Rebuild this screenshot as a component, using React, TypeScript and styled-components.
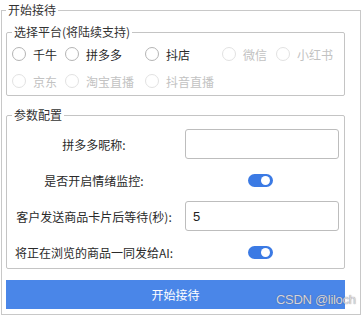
import React from 'react'
import styled, { createGlobalStyle } from 'styled-components'

const GlobalStyle = createGlobalStyle`
  html, body {
    margin: 0;
    padding: 0;
    background: #ffffff;
  }
  body {
    font-family: "Noto Sans CJK SC", "Noto Sans", sans-serif;
    font-size: 12px;
    color: #2a2a2a;
  }
`

const Page = styled.div`
  position: relative;
  width: 362px;
  height: 316px;
  padding-top: 2px;
  box-sizing: border-box;
`

const Group = styled.fieldset<{ $inner?: boolean }>`
  margin: 0 ${({ $inner }) => ($inner ? '0' : '1px')};
  width: ${({ $inner }) => ($inner ? 'auto' : '360px')};
  box-sizing: border-box;
  border: 1px solid ${({ $inner }) => ($inner ? '#c4c4c4' : '#c8c8c8')};
  border-radius: ${({ $inner }) => ($inner ? '2px' : '0')};
  padding: ${({ $inner }) => ($inner ? '1px 5px 1px 5px' : '6px 15px 5px 4px')};
  min-width: 0;
`

const Title = styled.legend`
  padding: 0 2px;
  margin: 0;
  font-size: 12px;
  line-height: 16px;
  color: #333;
`

const Stack = styled.div`
  display: flex;
  flex-direction: column;
  gap: 11px;
`

const PlatformGrid = styled.div`
  display: grid;
  grid-template-columns: 53px 80px 77px 54px auto;
  grid-auto-rows: 26px;
  row-gap: 1px;
`

const Option = styled.label<{ $disabled?: boolean }>`
  display: flex;
  align-items: center;
  gap: 7px;
  color: ${({ $disabled }) => ($disabled ? '#c2c2c2' : '#2a2a2a')};
  white-space: nowrap;
`

const Circle = styled.span<{ $disabled?: boolean }>`
  width: 14px;
  height: 14px;
  box-sizing: border-box;
  border-radius: 50%;
  border: 1px solid ${({ $disabled }) => ($disabled ? '#e2e2e2' : '#b4b4b4')};
  background: #fff;
  flex: none;
`

const ParamGrid = styled.div`
  display: grid;
  grid-template-columns: 164px 1fr;
  column-gap: 9px;
  grid-auto-rows: 30px;
  row-gap: 6px;
  padding: 5px 0 0;
`

const Label = styled.div`
  display: flex;
  align-items: center;
  justify-content: center;
  color: #2a2a2a;
  white-space: nowrap;
`

const Input = styled.div`
  box-sizing: border-box;
  border: 1px solid #bdbdbd;
  border-radius: 3px;
  background: #fff;
  padding: 0 7px;
  display: flex;
  align-items: center;
  font-family: "Liberation Sans", Arial, sans-serif;
  font-size: 13px;
  color: #222;
`

const Toggle = styled.div<{ $on?: boolean }>`
  justify-self: center;
  align-self: center;
  position: relative;
  width: 25px;
  height: 13px;
  margin-right: 4px;
  border-radius: 7px;
  background: ${({ $on }) => ($on ? '#3b7ae4' : '#ccc')};
  &::after {
    content: '';
    position: absolute;
    top: 2px;
    ${({ $on }) => ($on ? 'right: 3px;' : 'left: 3px;')}
    width: 9px;
    height: 9px;
    border-radius: 50%;
    background: #fff;
  }
`

const StartButton = styled.button`
  height: 29px;
  border: none;
  border-radius: 0;
  background: #4a86e8;
  color: #fff;
  font-family: "Noto Sans CJK SC", "Noto Sans", sans-serif;
  font-size: 12px;
  padding: 0;
`

const Watermark = styled.div`
  position: absolute;
  left: 276px;
  top: 292px;
  font-family: "Liberation Sans", Arial, sans-serif;
  font-size: 13px;
  color: rgba(230, 230, 236, 0.9);
  text-shadow: 0 0 1px rgba(60, 60, 80, 0.8);
  letter-spacing: -0.3px;
`

const platforms = [
  { name: '千牛' },
  { name: '拼多多' },
  { name: '抖店' },
  { name: '微信', disabled: true },
  { name: '小红书', disabled: true },
  { name: '京东', disabled: true },
  { name: '淘宝直播', disabled: true },
  { name: '抖音直播', disabled: true },
]

const App: React.FC = () => {
  return (
    <Page>
      <GlobalStyle />
      <Group>
        <Title>开始接待</Title>
        <Stack>
          <Group $inner>
            <Title>选择平台(将陆续支持)</Title>
            <PlatformGrid>
              {platforms.map((p) => (
                <Option key={p.name} $disabled={p.disabled}>
                  <Circle $disabled={p.disabled} />
                  {p.name}
                </Option>
              ))}
            </PlatformGrid>
          </Group>
          <Group $inner>
            <Title>参数配置</Title>
            <ParamGrid>
              <Label>拼多多昵称:</Label>
              <Input />
              <Label>是否开启情绪监控:</Label>
              <Toggle $on />
              <Label>客户发送商品卡片后等待(秒):</Label>
              <Input>5</Input>
              <Label>将正在浏览的商品一同发给AI:</Label>
              <Toggle $on />
            </ParamGrid>
          </Group>
          <StartButton>开始接待</StartButton>
        </Stack>
      </Group>
      <Watermark>CSDN @liloch</Watermark>
    </Page>
  )
}

export default App
